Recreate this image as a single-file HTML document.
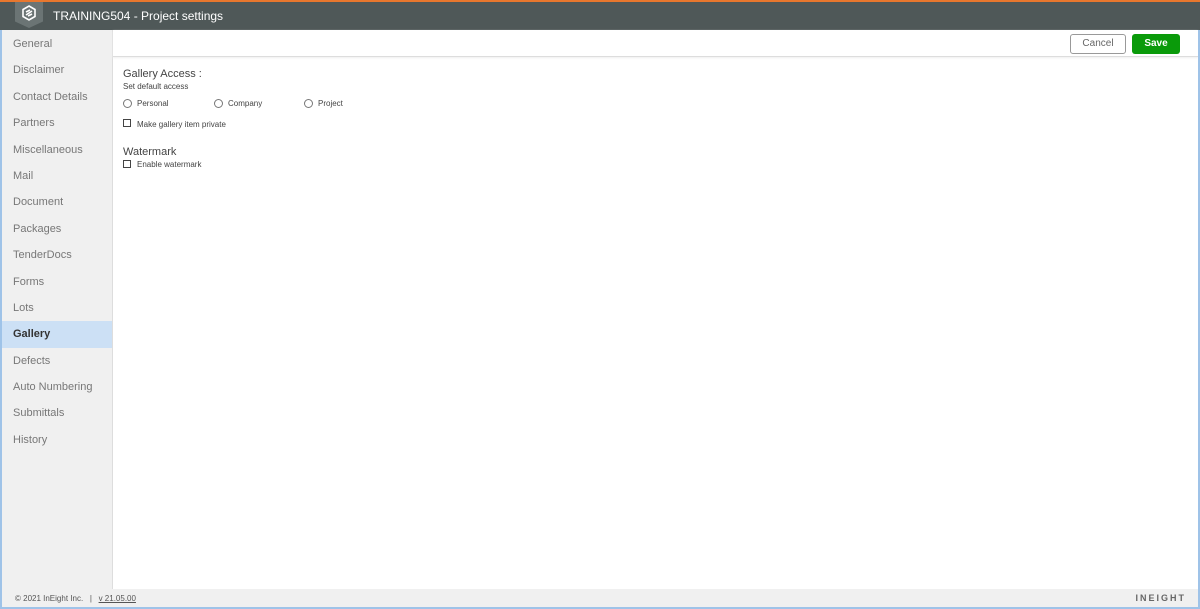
<!DOCTYPE html>
<html><head><style>
*{margin:0;padding:0;box-sizing:border-box}
body{width:1200px;height:609px;overflow:hidden;font-family:"Liberation Sans",sans-serif;background:#fff;position:relative}
.top{position:absolute;left:0;top:0;width:1200px;height:2px;background:#e8772e}
.hdr{position:absolute;left:0;top:2px;width:1200px;height:28px;background:#4f5858}
.logo{position:absolute;left:15px;top:0;width:28px;height:26px;background:#6b7474;clip-path:polygon(0 0,100% 0,100% 75%,50% 100%,0 75%)}
.title{position:absolute;left:53px;top:7px;color:#fff;font-size:12px}
.side{position:absolute;left:0;top:30px;width:113px;height:559px;background:#f0f0f0;border-right:1px solid #ddd;border-left:2px solid #9fc3e8;padding-top:1px}
.side div{height:26.4px;line-height:26.4px;padding-left:11px;font-size:11px;color:#777}
.side .sel{background:#cce0f5;color:#333;font-weight:bold}
.bar{position:absolute;left:113px;top:30px;width:1085px;height:27px;border-bottom:1px solid #ddd;box-shadow:0 1px 2px #eee}
.btn{position:absolute;top:4px;height:20px;border-radius:3px;font-size:10px;text-align:center;line-height:20px}
.cancel{left:957px;width:56px;border:1px solid #999;color:#666;background:#fff;line-height:18px}
.save{left:1019px;width:48px;background:#0a9a0a;color:#fff;font-weight:bold}
.c{position:absolute;font-size:8px;color:#444}
.h{font-size:11px;color:#444}
.rad{position:absolute;width:9px;height:9px;border:1px solid #777;border-radius:50%}
.chk{position:absolute;width:8px;height:8px;border:1px solid #444}
.foot{position:absolute;left:0;top:589px;width:1200px;height:18px;background:#f0f0f0;border-left:2px solid #9fc3e8;font-size:8px;color:#555}
.rb{position:absolute;left:1198px;top:30px;width:2px;height:579px;background:#9fc3e8}
.bb{position:absolute;left:0;top:607px;width:1200px;height:2px;background:#9fc3e8}
</style></head><body>
<div class="top"></div>
<div class="hdr"><div class="logo"><svg width="28" height="22" viewBox="0 0 28 22"><g fill="none" stroke="#fff" stroke-width="1.6"><polygon points="14,4 20,7.5 20,14.5 14,18 8,14.5 8,7.5"/><path d="M11 13 L17 9 M11 10 L15 8 M13 14 L17 12"/></g></svg></div><div class="title">TRAINING504 - Project settings</div></div>
<div class="side">
<div>General</div><div>Disclaimer</div><div>Contact Details</div><div>Partners</div><div>Miscellaneous</div><div>Mail</div><div>Document</div><div>Packages</div><div>TenderDocs</div><div>Forms</div><div>Lots</div><div class="sel">Gallery</div><div>Defects</div><div>Auto Numbering</div><div>Submittals</div><div>History</div>
</div>
<div class="bar"><div class="btn cancel">Cancel</div><div class="btn save">Save</div></div>
<div class="c h" style="left:123px;top:68px">Gallery Access :</div>
<div class="c" style="left:123px;top:82px">Set default access</div>
<div class="rad" style="left:123px;top:99px"></div><div class="c" style="left:137px;top:99px">Personal</div>
<div class="rad" style="left:214px;top:99px"></div><div class="c" style="left:228px;top:99px">Company</div>
<div class="rad" style="left:304px;top:99px"></div><div class="c" style="left:318px;top:99px">Project</div>
<div class="chk" style="left:123px;top:119px"></div><div class="c" style="left:137px;top:120px">Make gallery item private</div>
<div class="c h" style="left:123px;top:146px">Watermark</div>
<div class="chk" style="left:123px;top:160px"></div><div class="c" style="left:137px;top:160px">Enable watermark</div>
<div class="foot"><span style="position:absolute;left:13px;top:5px">© 2021 InEight Inc. &nbsp; | &nbsp; <u>v 21.05.00</u></span><span style="position:absolute;right:14px;top:4px;font-weight:bold;letter-spacing:2px;color:#666;font-size:9px">INEIGHT</span></div>
<div class="rb"></div><div class="bb"></div>
</body></html>
